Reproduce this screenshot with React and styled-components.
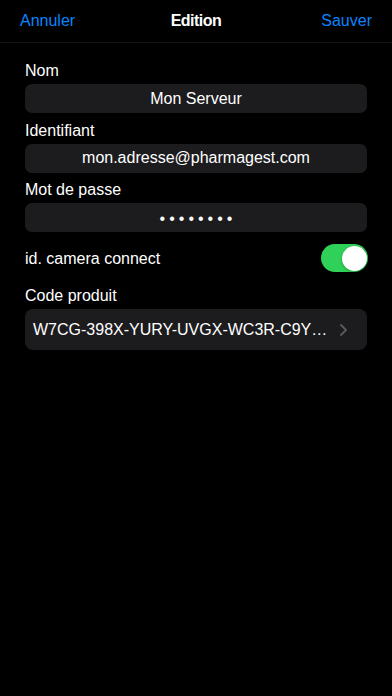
import React from "react";
import styled, { createGlobalStyle } from "styled-components";

const Global = createGlobalStyle`
  html, body { margin: 0; padding: 0; background: #000; }
  body { font-family: "Liberation Sans", Arial, sans-serif; color: #fff; }
  * { box-sizing: border-box; }
`;

const Screen = styled.div`
  width: 392px;
  height: 696px;
  background: #000;
  display: flex;
  flex-direction: column;
`;

const NavBar = styled.header`
  height: 43px;
  display: grid;
  grid-template-columns: 1fr auto 1fr;
  align-items: center;
  padding: 0 20px 1px;
  border-bottom: 1px solid #161616;
`;

const NavButton = styled.button`
  background: none;
  border: 0;
  padding: 0;
  font: inherit;
  font-size: 16px;
  color: #0a84ff;
  justify-self: ${(p) => (p.$end ? "end" : "start")};
  cursor: pointer;
`;

const Title = styled.h1`
  margin: 0;
  font-size: 16px;
  font-weight: 700;
  letter-spacing: -0.5px;
  color: #fff;
`;

const Form = styled.div`
  padding: 18px 25px 0;
  display: flex;
  flex-direction: column;
`;

const Group = styled.div`
  display: flex;
  flex-direction: column;
  margin-top: ${(p) => p.$top || 0}px;
`;

const Label = styled.label`
  font-size: 16px;
  line-height: 20px;
  color: #fff;
  margin-bottom: 3px;
`;

const Field = styled.div`
  height: 29px;
  border-radius: 7px;
  background: #1c1c1e;
  display: flex;
  align-items: center;
  justify-content: center;
  font-size: 16px;
  color: #fff;
`;

const Dots = styled.span`
  font-size: 16px;
  letter-spacing: 4px;
  padding-left: 4px;
  transform: translateY(1px);
`;

const ToggleRow = styled.div`
  margin-top: 12px;
  height: 28px;
  display: flex;
  align-items: center;
  justify-content: space-between;
  margin-right: -1px;
`;

const RowLabel = styled.span`
  font-size: 16px;
  line-height: 20px;
  transform: translateY(1px);
`;

const Track = styled.div`
  width: 47px;
  height: 28px;
  border-radius: 14px;
  background: ${(p) => (p.$on ? "#30d158" : "#39393d")};
  display: flex;
  align-items: center;
  justify-content: ${(p) => (p.$on ? "flex-end" : "flex-start")};
  padding: 0 1.5px;
`;

const Knob = styled.div`
  width: 25px;
  height: 25px;
  border-radius: 50%;
  background: #fff;
  box-shadow: 0 1px 3px rgba(0, 0, 0, 0.25);
`;

const LinkField = styled.div`
  height: 41px;
  border-radius: 8px;
  background: #1c1c1e;
  display: flex;
  align-items: center;
  padding: 0 20px 0 8px;
  gap: 8px;
`;

const Code = styled.span`
  flex: 1;
  min-width: 0;
  white-space: nowrap;
  font-size: 16px;
  color: #fff;
`;

const Chevron = () => (
  <svg width="7" height="12" viewBox="0 0 7 12" fill="none">
    <path d="M1 1l5 5-5 5" stroke="#5a5a5f" strokeWidth="1.8" strokeLinecap="round" strokeLinejoin="round" />
  </svg>
);

export default function App() {
  return (
    <>
      <Global />
      <Screen>
        <NavBar>
          <NavButton>Annuler</NavButton>
          <Title>Edition</Title>
          <NavButton $end>Sauver</NavButton>
        </NavBar>
        <Form>
          <Group>
            <Label>Nom</Label>
            <Field>Mon Serveur</Field>
          </Group>
          <Group $top={7.5}>
            <Label>Identifiant</Label>
            <Field>mon.adresse@pharmagest.com</Field>
          </Group>
          <Group $top={7.5}>
            <Label>Mot de passe</Label>
            <Field>
              <Dots>••••••••</Dots>
            </Field>
          </Group>
          <ToggleRow>
            <RowLabel>id. camera connect</RowLabel>
            <Track $on>
              <Knob />
            </Track>
          </ToggleRow>
          <Group $top={14}>
            <Label>Code produit</Label>
            <LinkField>
              <Code>W7CG-398X-YURY-UVGX-WC3R-C9Y…</Code>
              <Chevron />
            </LinkField>
          </Group>
        </Form>
      </Screen>
    </>
  );
}
